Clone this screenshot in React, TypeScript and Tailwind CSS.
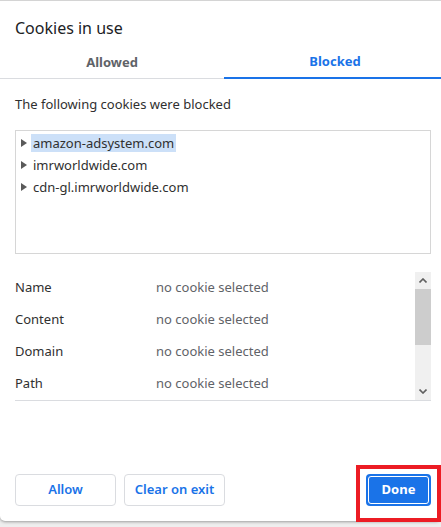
import React from "react";

const font = { fontFamily: '"Segoe UI", "Noto Sans", "Open Sans", sans-serif' };

function Triangle() {
  return (
    <svg width="6" height="8" viewBox="0 0 6 8" className="shrink-0">
      <path d="M0 0 L6 4 L0 8 Z" fill="#5a5a5a" />
    </svg>
  );
}

function TreeRow({ label, selected }: { label: string; selected?: boolean }) {
  return (
    <div className="h-[22px] flex items-center pl-[5px]">
      <Triangle />
      <span
        className={
          "ml-[4px] h-[18px] leading-[18px] px-[2px] text-[13px] text-[#303030] " +
          (selected ? "bg-[#cce0f8]" : "")
        }
      >
        {label}
      </span>
    </div>
  );
}

function DetailRow({ label }: { label: string }) {
  return (
    <div className="h-[32px] flex items-center text-[13px]">
      <div className="w-[141px] text-[#303030]">{label}</div>
      <div className="text-[#5f6368]">no cookie selected</div>
    </div>
  );
}

export default function App() {
  return (
    <div className="w-[441px] h-[527px] bg-[#eeeeee] overflow-hidden relative" style={font}>
      <div className="w-[441px] h-[521px] bg-white border-t border-[#d4d4d4] rounded-b-[5px] shadow-[0_1px_3px_rgba(0,0,0,0.35)] flex flex-col overflow-hidden">
        <div className="h-[45px] pt-[16px] pl-[15px] text-[16px] leading-[22px] text-[#202124]">
          Cookies in use
        </div>
        <div className="flex border-b border-[#dadce0] w-[441px]">
          <div className="w-[224px] shrink-0 h-[32px] pt-[1px] flex items-center justify-center text-[13px] font-bold text-[#5f6368]">
            Allowed
          </div>
          <div className="w-[222px] shrink-0 h-[33px] pt-[1px] -mb-px border-b-2 border-[#1a73e8] flex items-center justify-center text-[13px] font-bold text-[#1a73e8]">
            Blocked
          </div>
        </div>
        <div className="mt-[16px] pl-[15px] text-[13px] leading-[18px] text-[#303030]">
          The following cookies were blocked
        </div>
        <div className="mt-[17px] ml-[15px] w-[416px] h-[124px] border border-[#d6d6d6] pt-[1px]">
          <TreeRow label="amazon-adsystem.com" selected />
          <TreeRow label="imrworldwide.com" />
          <TreeRow label="cdn-gl.imrworldwide.com" />
        </div>
        <div className="mt-[18px] ml-[15px] w-[416px] h-[129px] border-b border-[#dadce0] flex">
          <div className="flex-1 flex flex-col">
            <DetailRow label="Name" />
            <DetailRow label="Content" />
            <DetailRow label="Domain" />
            <DetailRow label="Path" />
          </div>
          <div className="w-[16px] bg-[#f0f0f0] flex flex-col">
            <div className="h-[17px] flex items-center justify-center">
              <svg width="8" height="5" viewBox="0 0 8 5">
                <path d="M0.5 4.5 L4 1 L7.5 4.5" stroke="#606060" strokeWidth="1.6" fill="none" />
              </svg>
            </div>
            <div className="h-[56px] bg-[#cdcdcd]" />
            <div className="flex-1" />
            <div className="h-[17px] flex items-center justify-center">
              <svg width="8" height="5" viewBox="0 0 8 5">
                <path d="M0.5 0.5 L4 4 L7.5 0.5" stroke="#606060" strokeWidth="1.6" fill="none" />
              </svg>
            </div>
          </div>
        </div>
        <div className="flex-1" />
        <div className="flex items-center pl-[15px] pr-[10px] mb-[15px]">
          <button className="w-[101px] h-[32px] border border-[#dadce0] rounded-[4px] text-[13px] font-semibold text-[#1a73e8]">
            Allow
          </button>
          <button className="ml-[8px] w-[101px] h-[32px] border border-[#dadce0] rounded-[4px] text-[13px] font-semibold text-[#1a73e8]">
            Clear on exit
          </button>
          <div className="flex-1" />
          <button className="w-[65px] h-[32px] rounded-[4px] bg-[#1a73e8] p-[2px]">
            <span className="w-full h-full flex items-center justify-center rounded-[3px] border border-white text-[13px] font-bold text-white">
              Done
            </span>
          </button>
        </div>
      </div>
      <div className="absolute left-[356px] top-[465px] w-[85px] h-[57px] border-[4px] border-[#ec1c24]" />
    </div>
  );
}
